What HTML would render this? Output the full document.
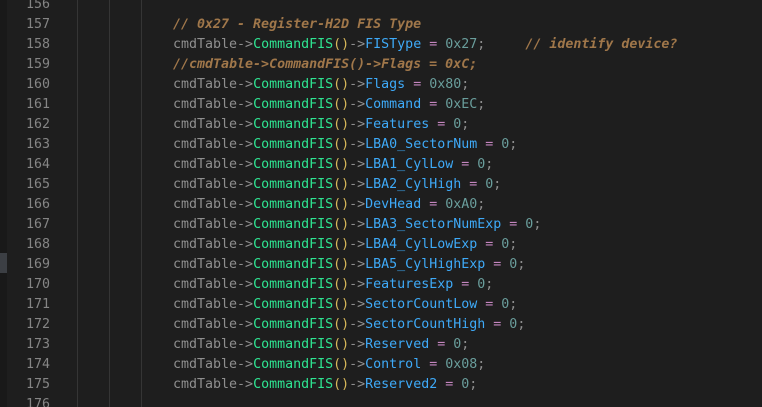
<!DOCTYPE html>
<html><head><style>
html,body{margin:0;padding:0;background:#1e1e1e;width:762px;height:407px;overflow:hidden}
body{position:relative;font-family:"DejaVu Sans Mono","Liberation Mono",monospace;font-size:13.3px}
.strip{position:absolute;left:0;top:0;width:7px;height:407px;background:#191919}
.mark{position:absolute;left:0;top:253px;width:7px;height:20px;background:#3c3f44}
.g{position:absolute;top:0;width:1px;height:407px;background:#353535}
.ln{position:absolute;left:0;width:50px;text-align:right;color:#858585;height:20px;line-height:20px;margin-top:2px}
.c{position:absolute;left:173px;height:20px;line-height:20px;white-space:pre;color:#8f8f8f;margin-top:2px}
.f{color:#2ee592}.p{color:#d9b95a}.m{color:#3eaaf8}.o{color:#c586c0}.n{color:#6a9e9c}
.cm{color:#a0774a;font-style:italic;font-weight:bold}
</style></head><body>
<div class="strip"></div><div class="mark"></div>
<div class="g" style="left:77px"></div><div class="g" style="left:109px"></div><div class="g" style="left:141px"></div>
<div class="ln" style="top:-7px">156</div>
<div class="ln" style="top:13px">157</div><div class="c cm" style="top:13px">// 0x27 - Register-H2D FIS Type</div>
<div class="ln" style="top:33px">158</div><div class="c" style="top:33px">cmdTable-&gt;<span class="f">CommandFIS</span><span class="p">()</span>-&gt;<span class="m">FISType</span> <span class="o">=</span> <span class="n">0x27</span>;     <span class="cm">// identify device?</span></div>
<div class="ln" style="top:53px">159</div><div class="c cm" style="top:53px">//cmdTable-&gt;CommandFIS()-&gt;Flags = 0xC;</div>
<div class="ln" style="top:73px">160</div><div class="c" style="top:73px">cmdTable-&gt;<span class="f">CommandFIS</span><span class="p">()</span>-&gt;<span class="m">Flags</span> <span class="o">=</span> <span class="n">0x80</span>;</div>
<div class="ln" style="top:93px">161</div><div class="c" style="top:93px">cmdTable-&gt;<span class="f">CommandFIS</span><span class="p">()</span>-&gt;<span class="m">Command</span> <span class="o">=</span> <span class="n">0xEC</span>;</div>
<div class="ln" style="top:113px">162</div><div class="c" style="top:113px">cmdTable-&gt;<span class="f">CommandFIS</span><span class="p">()</span>-&gt;<span class="m">Features</span> <span class="o">=</span> <span class="n">0</span>;</div>
<div class="ln" style="top:133px">163</div><div class="c" style="top:133px">cmdTable-&gt;<span class="f">CommandFIS</span><span class="p">()</span>-&gt;<span class="m">LBA0_SectorNum</span> <span class="o">=</span> <span class="n">0</span>;</div>
<div class="ln" style="top:153px">164</div><div class="c" style="top:153px">cmdTable-&gt;<span class="f">CommandFIS</span><span class="p">()</span>-&gt;<span class="m">LBA1_CylLow</span> <span class="o">=</span> <span class="n">0</span>;</div>
<div class="ln" style="top:173px">165</div><div class="c" style="top:173px">cmdTable-&gt;<span class="f">CommandFIS</span><span class="p">()</span>-&gt;<span class="m">LBA2_CylHigh</span> <span class="o">=</span> <span class="n">0</span>;</div>
<div class="ln" style="top:193px">166</div><div class="c" style="top:193px">cmdTable-&gt;<span class="f">CommandFIS</span><span class="p">()</span>-&gt;<span class="m">DevHead</span> <span class="o">=</span> <span class="n">0xA0</span>;</div>
<div class="ln" style="top:213px">167</div><div class="c" style="top:213px">cmdTable-&gt;<span class="f">CommandFIS</span><span class="p">()</span>-&gt;<span class="m">LBA3_SectorNumExp</span> <span class="o">=</span> <span class="n">0</span>;</div>
<div class="ln" style="top:233px">168</div><div class="c" style="top:233px">cmdTable-&gt;<span class="f">CommandFIS</span><span class="p">()</span>-&gt;<span class="m">LBA4_CylLowExp</span> <span class="o">=</span> <span class="n">0</span>;</div>
<div class="ln" style="top:253px">169</div><div class="c" style="top:253px">cmdTable-&gt;<span class="f">CommandFIS</span><span class="p">()</span>-&gt;<span class="m">LBA5_CylHighExp</span> <span class="o">=</span> <span class="n">0</span>;</div>
<div class="ln" style="top:273px">170</div><div class="c" style="top:273px">cmdTable-&gt;<span class="f">CommandFIS</span><span class="p">()</span>-&gt;<span class="m">FeaturesExp</span> <span class="o">=</span> <span class="n">0</span>;</div>
<div class="ln" style="top:293px">171</div><div class="c" style="top:293px">cmdTable-&gt;<span class="f">CommandFIS</span><span class="p">()</span>-&gt;<span class="m">SectorCountLow</span> <span class="o">=</span> <span class="n">0</span>;</div>
<div class="ln" style="top:313px">172</div><div class="c" style="top:313px">cmdTable-&gt;<span class="f">CommandFIS</span><span class="p">()</span>-&gt;<span class="m">SectorCountHigh</span> <span class="o">=</span> <span class="n">0</span>;</div>
<div class="ln" style="top:333px">173</div><div class="c" style="top:333px">cmdTable-&gt;<span class="f">CommandFIS</span><span class="p">()</span>-&gt;<span class="m">Reserved</span> <span class="o">=</span> <span class="n">0</span>;</div>
<div class="ln" style="top:353px">174</div><div class="c" style="top:353px">cmdTable-&gt;<span class="f">CommandFIS</span><span class="p">()</span>-&gt;<span class="m">Control</span> <span class="o">=</span> <span class="n">0x08</span>;</div>
<div class="ln" style="top:373px">175</div><div class="c" style="top:373px">cmdTable-&gt;<span class="f">CommandFIS</span><span class="p">()</span>-&gt;<span class="m">Reserved2</span> <span class="o">=</span> <span class="n">0</span>;</div>
<div class="ln" style="top:393px">176</div>
</body></html>
